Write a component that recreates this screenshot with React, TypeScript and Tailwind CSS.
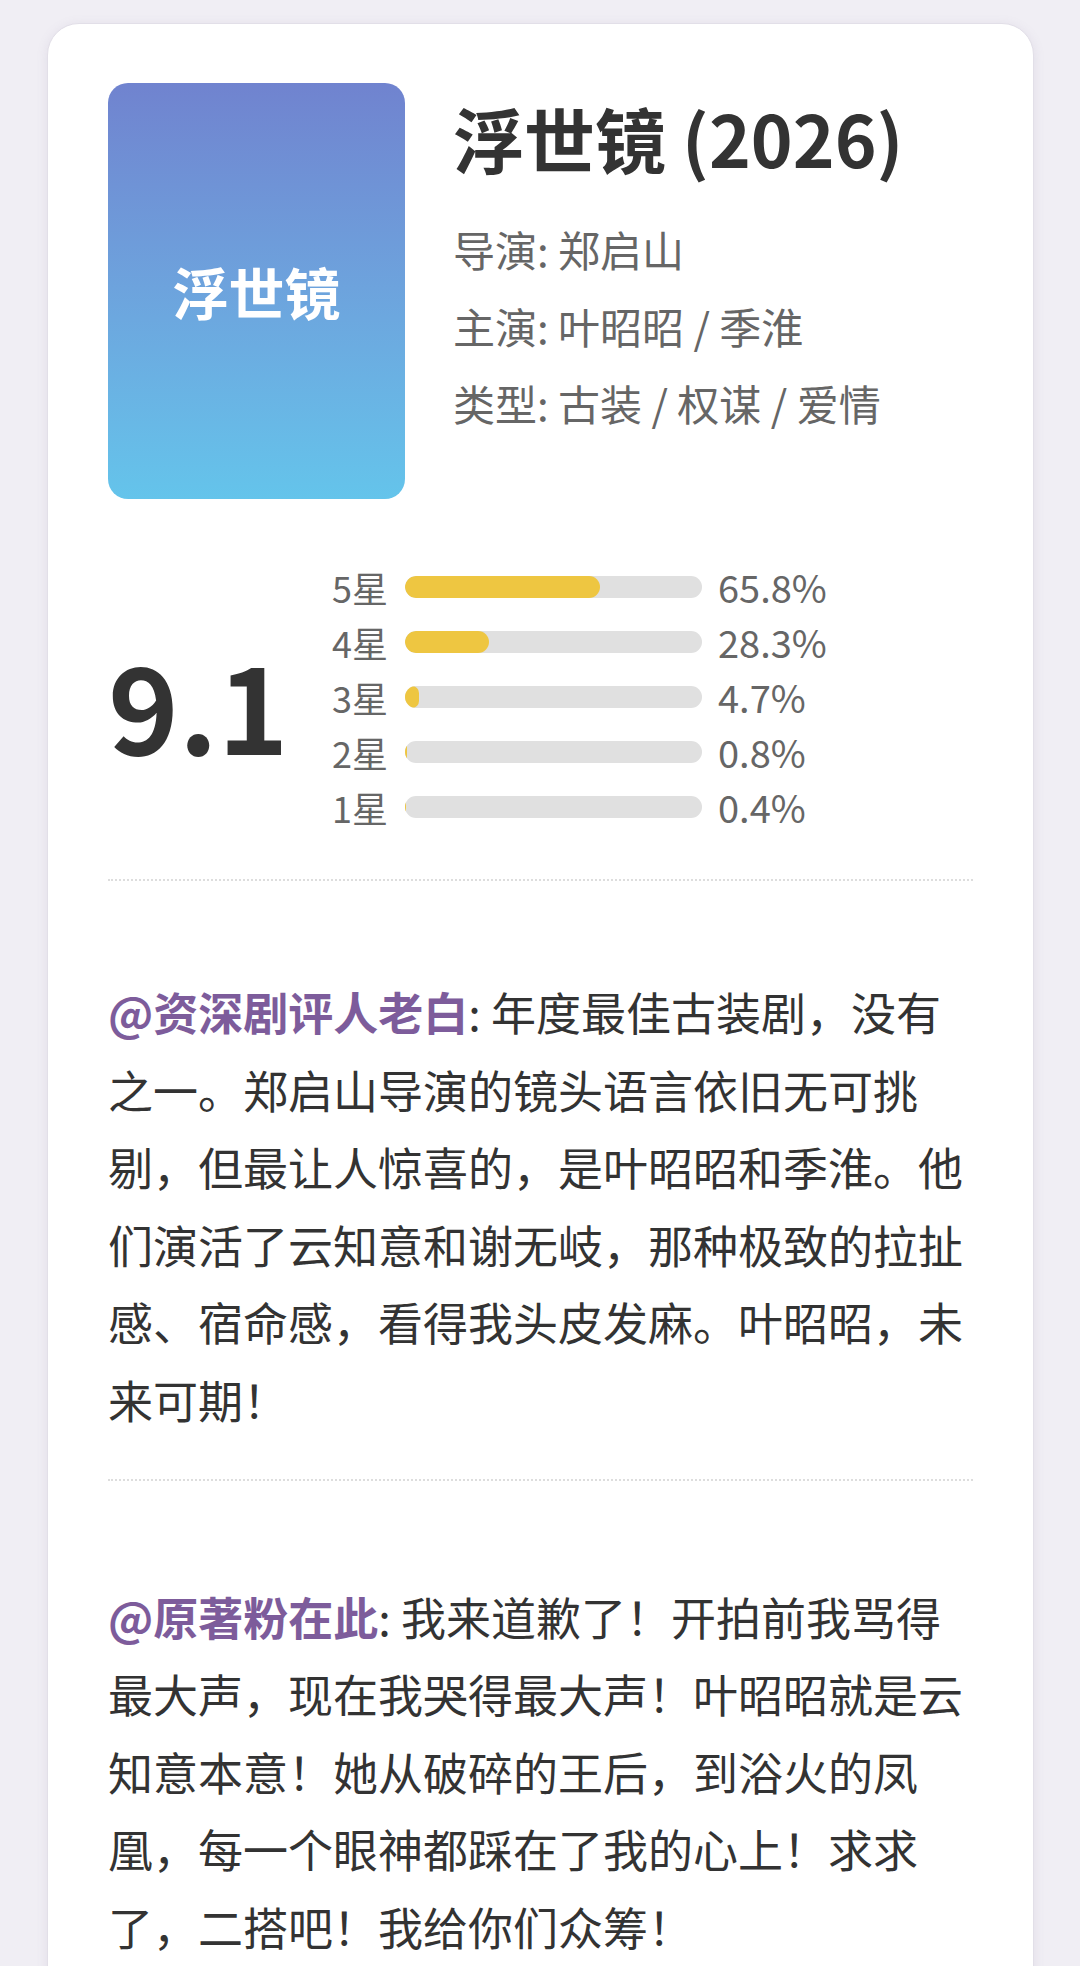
import React from "react";

const rows = [
  { label: "5星", pct: 65.8 },
  { label: "4星", pct: 28.3 },
  { label: "3星", pct: 4.7 },
  { label: "2星", pct: 0.8 },
  { label: "1星", pct: 0.4 },
];

export default function App() {
  return (
    <div
      className="min-h-screen bg-[#f0eef4] pt-[23px] pl-[47px] pb-[40px]"
      style={{ fontFamily: '"Noto Sans CJK SC", "Noto Sans", sans-serif' }}
    >
      <div className="w-[987px] bg-white rounded-[32px] border border-[#e2dfe8] shadow-[0_2px_12px_rgba(120,110,150,0.12)] px-[60px] pt-[59px] pb-[60px]">
        {/* Header */}
        <div className="flex gap-[48px]">
          <div className="w-[297px] h-[416px] shrink-0 rounded-[20px] bg-gradient-to-b from-[#7083cf] to-[#64c4eb] flex items-center justify-center">
            <span className="text-white font-bold text-[56px] leading-none">浮世镜</span>
          </div>
          <div className="flex flex-col">
            <h1 className="mt-[12px] text-[71px] leading-[85px] font-bold text-[#333]">浮世镜 (2026)</h1>
            <div className="mt-[30px] text-[42px] leading-[77px] text-[#666]">
              <p>导演: 郑启山</p>
              <p>主演: 叶昭昭 / 季淮</p>
              <p>类型: 古装 / 权谋 / 爱情</p>
            </div>
          </div>
        </div>

        {/* Rating */}
        <div className="mt-[60px] flex items-center">
          <div className="w-[224px] shrink-0 pt-[12px] text-[120px] leading-none font-bold text-[#333]">9.1</div>
          <div className="flex flex-col">
            {rows.map((r) => (
              <div key={r.label} className="h-[55px] flex items-center">
                <span className="w-[73px] shrink-0 text-[36px] text-[#666] leading-none">{r.label}</span>
                <div className="w-[297px] h-[22px] rounded-full bg-[#e0e0e0] overflow-hidden">
                  <div className="h-full rounded-full bg-[#eec641]" style={{ width: `${r.pct}%` }} />
                </div>
                <span className="ml-[16px] text-[38px] text-[#666] leading-none">{r.pct.toFixed(1)}%</span>
              </div>
            ))}
          </div>
        </div>

        <div className="mt-[45px] border-t-2 border-dotted border-[#dddddd]" />

        {/* Review 1 */}
        <div className="pt-[92px] pb-[40px] text-[45px] leading-[77.6px] text-[#333]">
          <span className="font-bold text-[#7d5c9b]">@资深剧评人老白</span>: 年度最佳古装剧，没有之一。郑启山导演的镜头语言依旧无可挑剔，但最让人惊喜的，是叶昭昭和季淮。他们演活了云知意和谢无岐，那种极致的拉扯感、宿命感，看得我头皮发麻。叶昭昭，未来可期！
        </div>

        <div className="border-t-2 border-dotted border-[#dddddd]" />

        {/* Review 2 */}
        <div className="pt-[97px] pb-[40px] text-[45px] leading-[77.6px] text-[#333]">
          <span className="font-bold text-[#7d5c9b]">@原著粉在此</span>: 我来道歉了！开拍前我骂得最大声，现在我哭得最大声！叶昭昭就是云知意本意！她从破碎的王后，到浴火的凤凰，每一个眼神都踩在了我的心上！求求了，二搭吧！我给你们众筹！
        </div>
      </div>
    </div>
  );
}
